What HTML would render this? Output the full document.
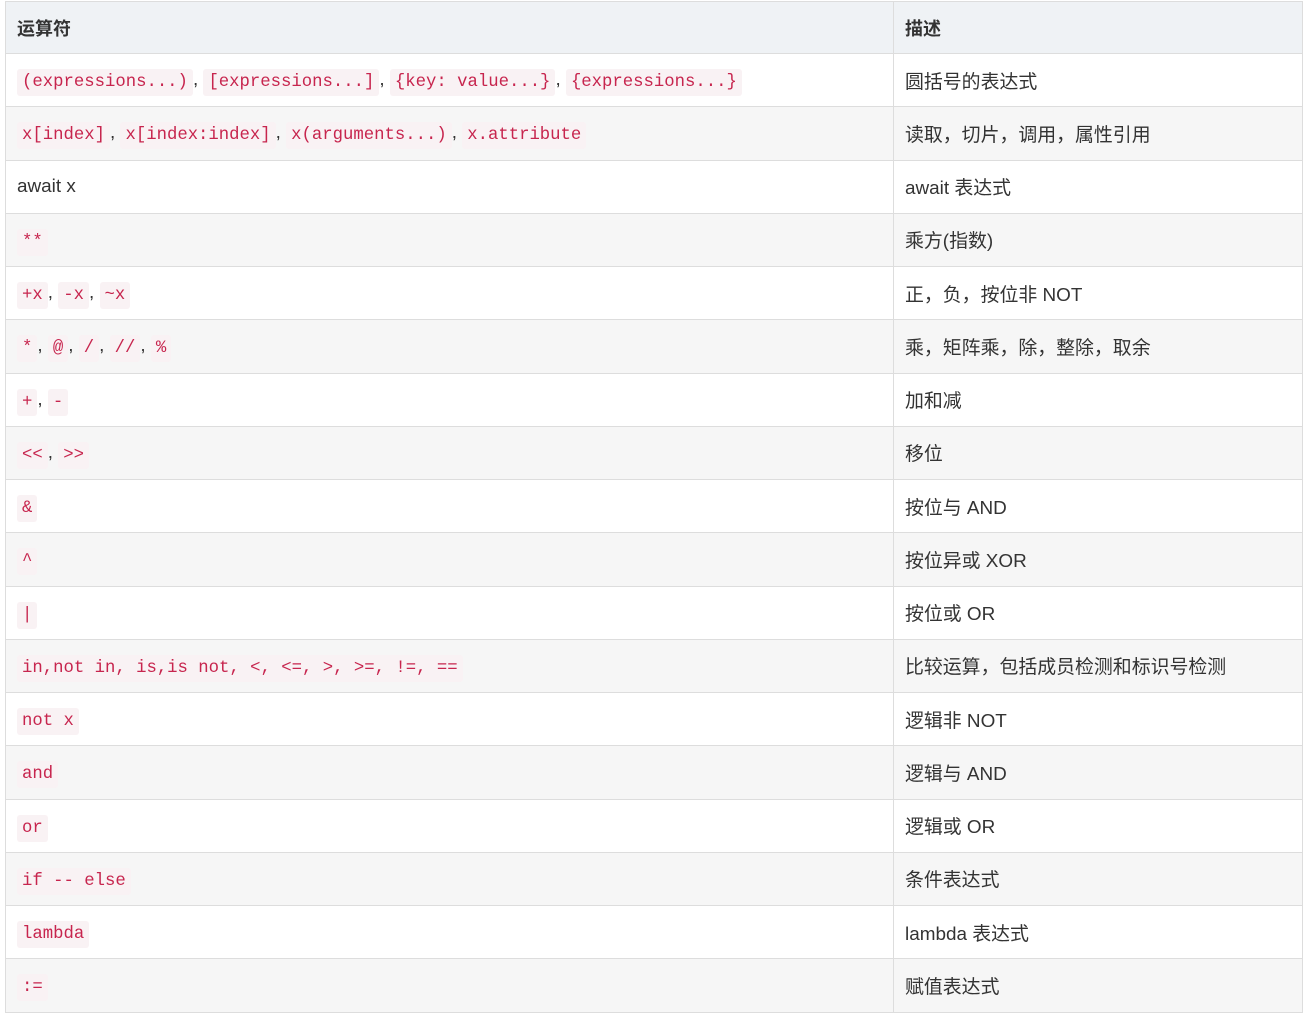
<!DOCTYPE html>
<html><head><meta charset="utf-8"><style>
body{margin:0;background:#fff;}
table{position:absolute;left:5px;top:1px;width:1298px;border-collapse:collapse;font-family:"Liberation Sans","Noto Sans CJK SC",sans-serif;font-size:18.9px;color:#333;}
td,th{border:1px solid #ddd;padding:0 0 0 11px;text-align:left;vertical-align:middle;}
th{background:#eff2f5;font-weight:bold;height:51px;font-size:18px;}
tr{height:53.25px;}
tr:nth-child(odd) td{background:#f6f6f6;}
tr:nth-child(even) td{background:#fff;}
td.l{width:876px;}
code{font-family:"Liberation Mono",monospace;font-size:17.3px;color:#c7254e;background:#f9f2f4;padding:4px 5px;border-radius:3px;position:relative;top:1px;}
</style></head><body>
<table>
<tr style="height:52px"><th class="l" style="width:876px">运算符</th><th>描述</th></tr>
<tr><td class="l"><code>(expressions...)</code>, <code>[expressions...]</code>, <code>{key: value...}</code>, <code>{expressions...}</code></td><td>圆括号的表达式</td></tr>
<tr><td class="l"><code>x[index]</code>, <code>x[index:index]</code>, <code>x(arguments...)</code>, <code>x.attribute</code></td><td>读取，切片，调用，属性引用</td></tr>
<tr><td class="l">await x</td><td>await 表达式</td></tr>
<tr><td class="l"><code>**</code></td><td>乘方(指数)</td></tr>
<tr><td class="l"><code>+x</code>, <code>-x</code>, <code>~x</code></td><td>正，负，按位非 NOT</td></tr>
<tr><td class="l"><code>*</code>, <code>@</code>, <code>/</code>, <code>//</code>, <code>%</code></td><td>乘，矩阵乘，除，整除，取余</td></tr>
<tr><td class="l"><code>+</code>, <code>-</code></td><td>加和减</td></tr>
<tr><td class="l"><code>&lt;&lt;</code>, <code>&gt;&gt;</code></td><td>移位</td></tr>
<tr><td class="l"><code>&amp;</code></td><td>按位与 AND</td></tr>
<tr><td class="l"><code>^</code></td><td>按位异或 XOR</td></tr>
<tr><td class="l"><code>|</code></td><td>按位或 OR</td></tr>
<tr><td class="l"><code>in,not in, is,is not, &lt;, &lt;=, &gt;, &gt;=, !=, ==</code></td><td>比较运算，包括成员检测和标识号检测</td></tr>
<tr><td class="l"><code>not x</code></td><td>逻辑非 NOT</td></tr>
<tr><td class="l"><code>and</code></td><td>逻辑与 AND</td></tr>
<tr><td class="l"><code>or</code></td><td>逻辑或 OR</td></tr>
<tr><td class="l"><code>if -- else</code></td><td>条件表达式</td></tr>
<tr><td class="l"><code>lambda</code></td><td>lambda 表达式</td></tr>
<tr><td class="l"><code>:=</code></td><td>赋值表达式</td></tr>
</table>
</body></html>
